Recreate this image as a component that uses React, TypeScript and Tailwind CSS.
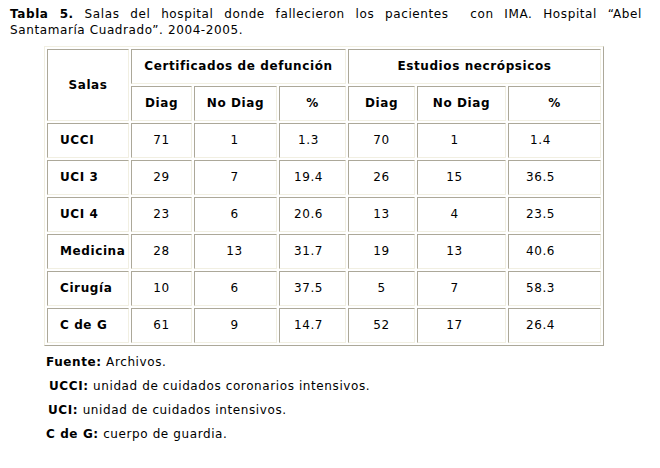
import React from "react";

type Row = { sala: string; vals: string[] };

const rows: Row[] = [
  { sala: "UCCI", vals: ["71", "1", "1.3", "70", "1", "1.4"] },
  { sala: "UCI 3", vals: ["29", "7", "19.4", "26", "15", "36.5"] },
  { sala: "UCI 4", vals: ["23", "6", "20.6", "13", "4", "23.5"] },
  { sala: "Medicina", vals: ["28", "13", "31.7", "19", "13", "40.6"] },
  { sala: "Cirugía", vals: ["10", "6", "37.5", "5", "7", "58.3"] },
  { sala: "C de G", vals: ["61", "9", "14.7", "52", "17", "26.4"] },
];

const valPad = ["pr-0", "pr-[2px]", "pr-[8px]", "pr-0", "pr-[14px]", "pr-[28px]"];

const cell =
  "border border-t-[#aca899] border-l-[#aca899] border-r-[#f1efe2] border-b-[#f1efe2] h-[35px] p-0 leading-[15px]";

export default function App() {
  return (
    <div
      className="w-[660px] h-[468px] bg-white text-black text-[12px] tracking-[0.6px]"
      style={{ fontFamily: '"DejaVu Sans", Verdana, sans-serif' }}
    >
      <div className="pl-[10px] pr-[18px] pt-[6px] leading-[16px]">
        <p className="text-justify [text-align-last:justify]">
          <b>Tabla 5.</b> Salas del hospital donde fallecieron los pacientes&nbsp; con IMA. Hospital “Abel
        </p>
        <p>Santamaría Cuadrado”. 2004-2005.</p>
      </div>

      <div className="pl-[44px] pt-[8px]">
        <table className="table-fixed w-[560px] border-separate border-spacing-[2px] border border-t-[#f1efe2] border-l-[#f1efe2] border-r-[#aca899] border-b-[#aca899]">
          <colgroup>
            <col className="w-[82px]" />
            <col className="w-[61px]" />
            <col className="w-[83px]" />
            <col className="w-[67px]" />
            <col className="w-[67px]" />
            <col className="w-[89px]" />
            <col className="w-[93px]" />
          </colgroup>
          <thead>
            <tr>
              <th rowSpan={2} className={cell + " text-center"}>
                Salas
              </th>
              <th colSpan={3} className={cell + " text-center"}>
                Certificados de defunción
              </th>
              <th colSpan={3} className={cell + " text-center"}>
                Estudios necrópsicos
              </th>
            </tr>
            <tr>
              {["Diag", "No Diag", "%", "Diag", "No Diag", "%"].map((h, i) => (
                <th key={i} className={cell + " text-center"}>
                  {h}
                </th>
              ))}
            </tr>
          </thead>
          <tbody>
            {rows.map((r) => (
              <tr key={r.sala}>
                <td className={cell + " font-bold pl-[12px] text-left"}>{r.sala}</td>
                {r.vals.map((v, i) => (
                  <td key={i} className={cell + " text-center " + valPad[i]}>
                    {v}
                  </td>
                ))}
              </tr>
            ))}
          </tbody>
        </table>
      </div>

      <div className="pt-[8px] flex flex-col gap-[8px] leading-[16px]">
        <p className="pl-[46px]">
          <b>Fuente:</b> Archivos.
        </p>
        <p className="pl-[49px]">
          <b>UCCI:</b> unidad de cuidados coronarios intensivos.
        </p>
        <p className="pl-[48px]">
          <b>UCI:</b> unidad de cuidados intensivos.
        </p>
        <p className="pl-[46px]">
          <b>C de G:</b> cuerpo de guardia.
        </p>
      </div>
    </div>
  );
}
